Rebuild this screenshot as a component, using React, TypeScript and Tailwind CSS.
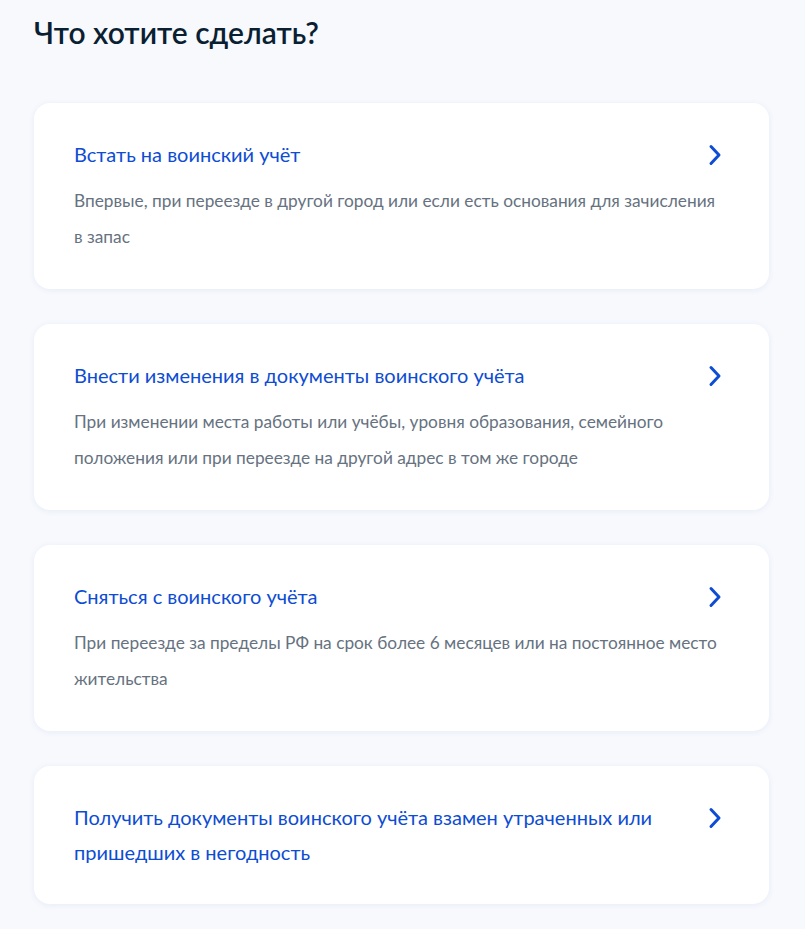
const items = [
  {
    title: 'Встать на воинский учёт',
    text: 'Впервые, при переезде в другой город или если есть основания для зачисления в запас',
  },
  {
    title: 'Внести изменения в документы воинского учёта',
    text: 'При изменении места работы или учёбы, уровня образования, семейного положения или при переезде на другой адрес в том же городе',
  },
  {
    title: 'Сняться с воинского учёта',
    text: 'При переезде за пределы РФ на срок более 6 месяцев или на постоянное место жительства',
  },
  {
    title: 'Получить документы воинского учёта взамен утраченных или пришедших в негодность',
  },
];

function Chevron() {
  return (
    <svg width="14" height="22" viewBox="0 0 14 22" fill="none" className="absolute right-[47px] top-[41px]">
      <path d="M3 2.5L11 11L3 19.5" stroke="#0d4cd3" strokeWidth="3" strokeLinecap="round" strokeLinejoin="round" />
    </svg>
  );
}

export default function App() {
  return (
    <div className="min-h-[929px] bg-[#f7f9fd] px-[34px] pt-[12px] pb-[26px]" style={{ fontFamily: 'Lato, "Noto Sans", sans-serif' }}>
      <h1 className="text-[30px] leading-[40px] font-semibold text-[#0b1f33] mb-[51px]">Что хотите сделать?</h1>
      <div className="flex flex-col gap-[35px] w-[735px]">
        {items.map((item) => (
          <div
            key={item.title}
            className="relative bg-white rounded-[16px] pl-10 pr-[44px] pt-[34px] pb-[34px] shadow-[0_1px_6px_rgba(40,80,160,0.08)]"
          >
            <div className="text-[20px] leading-[35px] text-[#0d4cd3] pr-[40px]">{item.title}</div>
            {item.text && (
              <div className="mt-[11px] text-[17.3px] leading-[36px] text-[#66727f]">{item.text}</div>
            )}
            <Chevron />
          </div>
        ))}
      </div>
    </div>
  );
}
